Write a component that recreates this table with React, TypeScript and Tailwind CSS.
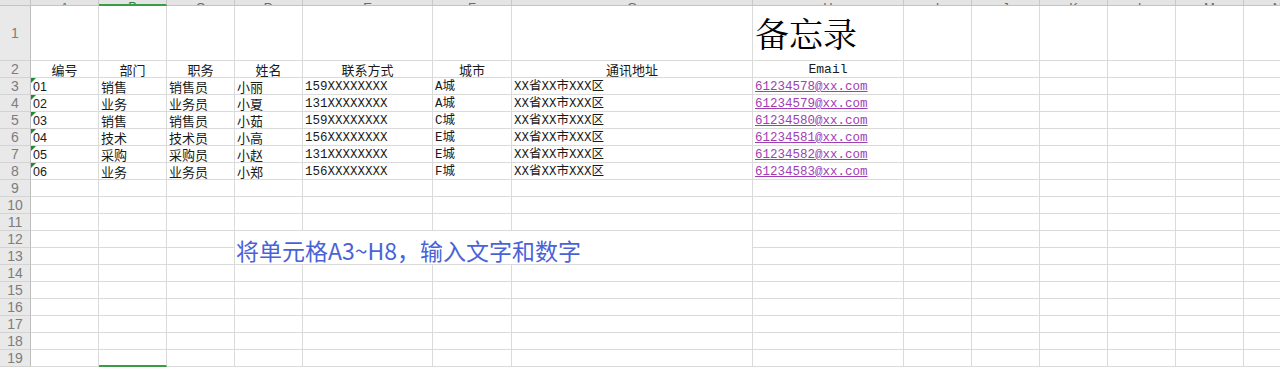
import React from 'react';

const COLS = ['A', 'B', 'C', 'D', 'E', 'F', 'G', 'H', 'I', 'J', 'K', 'L', 'M', 'N'];

const HEADERS = ['编号', '部门', '职务', '姓名', '联系方式', '城市', '通讯地址', 'Email'];

const ROWS: string[][] = [
  ['01', '销售', '销售员', '小丽', '159XXXXXXXX', 'A城', 'XX省XX市XXX区', '61234578@xx.com'],
  ['02', '业务', '业务员', '小夏', '131XXXXXXXX', 'A城', 'XX省XX市XXX区', '61234579@xx.com'],
  ['03', '销售', '销售员', '小茹', '159XXXXXXXX', 'C城', 'XX省XX市XXX区', '61234580@xx.com'],
  ['04', '技术', '技术员', '小高', '156XXXXXXXX', 'E城', 'XX省XX市XXX区', '61234581@xx.com'],
  ['05', '采购', '采购员', '小赵', '131XXXXXXXX', 'E城', 'XX省XX市XXX区', '61234582@xx.com'],
  ['06', '业务', '业务员', '小郑', '156XXXXXXXX', 'F城', 'XX省XX市XXX区', '61234583@xx.com'],
];

const CJK = "font-['Noto_Sans_CJK_SC',sans-serif]";
const MONO = "font-['Liberation_Mono','Noto_Sans_CJK_SC',monospace]";
const SANS = "font-['Liberation_Sans','Noto_Sans_CJK_SC',sans-serif]";

const cell = 'border-r border-b border-[#dadada] bg-white overflow-visible whitespace-nowrap';

function RowHead({ n }: { n: number }) {
  return (
    <div
      className={`flex items-center justify-center bg-[#e9e9e9] border-r border-r-[#bdbdbd] border-b border-b-[#d3d3d3] text-[14px] leading-none text-[#7d7d7d] ${SANS}`}
    >
      {n}
    </div>
  );
}

function Blank({ green }: { green?: boolean }) {
  return <div className={green ? 'bg-white border-r border-[#dadada] border-b-2 border-b-[#3a9c47]' : cell} />;
}

export default function App() {
  const body: React.ReactNode[] = [];

  // column letters, mostly scrolled out of view
  body.push(<div key="corner" className="bg-[#e4e4e4] border-r border-r-[#c4c4c4] border-b border-b-[#c4c4c4]" />);
  COLS.forEach((c) => {
    body.push(
      <div
        key={'h' + c}
        className={`flex items-end justify-center overflow-hidden bg-[#e4e4e4] border-r border-r-[#c8c8c8] ${SANS} ${
          c === 'B' ? 'border-b-2 border-b-[#3a9c47]' : 'border-b border-b-[#c4c4c4]'
        }`}
      >
        <span className={`text-[13px] leading-none -mb-[9px] ${c === 'B' ? 'text-[#2f7d38]' : 'text-[#6a6a6a]'}`}>{c}</span>
      </div>
    );
  });

  // row 1: title
  body.push(<RowHead key="r1" n={1} />);
  COLS.forEach((c) => {
    if (c === 'H') {
      body.push(
        <div key="1H" className={`${cell} flex items-end pl-[2px] pb-[10px]`}>
          <span className="text-[34px] leading-none text-black font-['Noto_Serif_CJK_SC','Noto_Sans_CJK_SC',serif]">
            备忘录
          </span>
        </div>
      );
    } else {
      body.push(<Blank key={'1' + c} />);
    }
  });

  // row 2: headers
  body.push(<RowHead key="r2" n={2} />);
  COLS.forEach((c, i) => {
    const h = HEADERS[i];
    body.push(
      <div
        key={'2' + c}
        className={`${cell} flex items-end justify-center text-[13px] leading-[15px] text-[#1a1a1a] ${h === 'Email' ? MONO : CJK}`}
      >
        {h ?? ''}
      </div>
    );
  });

  // rows 3..8: data
  ROWS.forEach((r, ri) => {
    const n = ri + 3;
    body.push(<RowHead key={'r' + n} n={n} />);
    COLS.forEach((c, i) => {
      const v = r[i];
      if (v === undefined) {
        body.push(<Blank key={n + c} />);
        return;
      }
      if (i === 0) {
        body.push(
          <div key={n + c} className={`${cell} relative flex items-end pl-[2px] text-[12.5px] leading-[13px] text-[#1a1a1a] ${SANS}`}>
            <span className="absolute left-0 top-0 w-0 h-0 border-t-[5px] border-t-[#1f8a34] border-r-[5px] border-r-transparent" />
            {v}
          </div>
        );
      } else if (i === 7) {
        body.push(
          <div key={n + c} className={`${cell} flex items-end pl-[2px] text-[12.5px] leading-[13px] text-[#a03db4] underline ${MONO}`}>
            {v}
          </div>
        );
      } else if (i >= 4) {
        body.push(
          <div key={n + c} className={`${cell} flex items-end pl-[2px] text-[12.5px] leading-[13px] text-[#1a1a1a] ${MONO}`}>
            {v}
          </div>
        );
      } else {
        body.push(
          <div key={n + c} className={`${cell} flex items-end pl-[2px] text-[13px] leading-[14px] text-[#1a1a1a] ${CJK}`}>
            {v}
          </div>
        );
      }
    });
  });

  // rows 9..19: empty, D12:G13 merged
  for (let n = 9; n <= 19; n++) {
    body.push(<RowHead key={'r' + n} n={n} />);
    COLS.forEach((c, i) => {
      if ((n === 12 || n === 13) && i >= 3 && i <= 6) return;
      body.push(<Blank key={n + c} green={n === 19 && c === 'B'} />);
    });
  }

  return (
    <div className="w-[1280px] h-[367px] overflow-hidden bg-white">
      <div className="grid grid-cols-[31px_68px_68px_68px_68px_130px_79px_241px_151px_68px_68px_68px_68px_68px_68px] grid-rows-[6px_55px_repeat(18,17px)] w-[1312px]">
        {body}
        <div className={`col-start-5 col-span-4 row-start-13 row-span-2 flex items-end pl-[1px] pb-[1px] border-r border-b border-[#dadada] bg-white ${CJK}`}>
          <span className="text-[23px] leading-[26px] text-[#4a62d8] whitespace-nowrap">将单元格A3~H8，输入文字和数字</span>
        </div>
      </div>
    </div>
  );
}
